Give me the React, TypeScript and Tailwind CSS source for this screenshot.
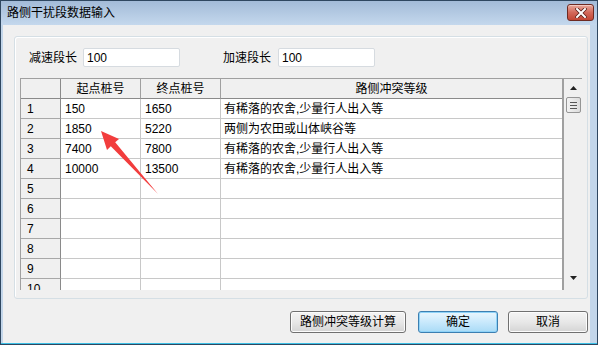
import { Fragment } from "react";

const FONT = "font-['Liberation_Sans','Noto_Sans_CJK_SC',sans-serif]";

const rows = [
  { a: "150", b: "1650", c: "有稀落的农舍,少量行人出入等" },
  { a: "1850", b: "5220", c: "两侧为农田或山体峡谷等" },
  { a: "7400", b: "7800", c: "有稀落的农舍,少量行人出入等" },
  { a: "10000", b: "13500", c: "有稀落的农舍,少量行人出入等" },
  { a: "", b: "", c: "" },
  { a: "", b: "", c: "" },
  { a: "", b: "", c: "" },
  { a: "", b: "", c: "" },
  { a: "", b: "", c: "" },
  { a: "", b: "", c: "" },
];

const CloseButton = () => (
  <div className="w-[27px] h-[17px] rounded-[3px] border border-[#6e2a22] bg-gradient-to-b from-[#e7a79b] via-[#d3695a] to-[#c24533] flex items-center justify-center shadow-[inset_0_1px_0_#f3c9c1]">
    <svg width="12" height="10" viewBox="0 0 12 10">
      <path
        d="M2 1 L10 9 M10 1 L2 9"
        stroke="#5a1f18"
        strokeWidth="3.6"
        strokeLinecap="square"
      />
      <path
        d="M2 1 L10 9 M10 1 L2 9"
        stroke="#ffffff"
        strokeWidth="2"
        strokeLinecap="square"
      />
    </svg>
  </div>
);

const Button = ({ label, primary }: { label: string; primary?: boolean }) => (
  <div
    className={
      primary
        ? "w-[80px] h-[22px] rounded-[3px] border border-[#3c7fb1] bg-gradient-to-b from-[#eaf6fd] via-[#c9e9fc] to-[#a9dbf6] shadow-[inset_0_0_0_1px_#8fd3f8] flex items-center justify-center text-[12px] text-black"
        : "h-[22px] rounded-[3px] border border-[#707070] bg-gradient-to-b from-[#f4f4f4] via-[#e8e8e8] to-[#d4d4d4] shadow-[inset_0_0_0_1px_#fcfcfc] flex items-center justify-center text-[12px] text-black"
    }
  >
    {label}
  </div>
);

const ScrollBar = () => (
  <div className="w-[20px] h-full border-l-2 border-[#a0a0a0] bg-[#f0f0f0] flex flex-col items-center">
    <div className="h-[18px] w-full flex items-center justify-center">
      <svg width="7" height="4" viewBox="0 0 7 4">
        <path d="M0 4 L3.5 0 L7 4 Z" fill="#222" />
      </svg>
    </div>
    <div className="w-[15px] h-[16px] ml-[1px] rounded-[2px] border border-[#959595] bg-gradient-to-r from-[#f2f2f2] to-[#dcdcdc] flex flex-col items-center justify-center gap-[2px]">
      <div className="w-[7px] h-px bg-[#555]" />
      <div className="w-[7px] h-px bg-[#555]" />
      <div className="w-[7px] h-px bg-[#555]" />
    </div>
    <div className="flex-1" />
    <div className="h-[16px] w-full flex items-start justify-center pt-[2px]">
      <svg width="7" height="4" viewBox="0 0 7 4">
        <path d="M0 0 L7 0 L3.5 4 Z" fill="#222" />
      </svg>
    </div>
  </div>
);

const Grid = () => (
  <div className="flex-1 overflow-hidden bg-white">
    <div className="grid grid-cols-[40px_80px_80px_341px] auto-rows-[20px]">
      <div className="bg-[#f0f0f0] border-r border-b border-[#8a8a8a]" />
      <div className="bg-[#f0f0f0] border-r border-b border-[#a0a0a0] border-b-[#8a8a8a] flex items-center justify-center">
        起点桩号
      </div>
      <div className="bg-[#f0f0f0] border-r border-b border-[#a0a0a0] border-b-[#8a8a8a] flex items-center justify-center">
        终点桩号
      </div>
      <div className="bg-[#f0f0f0] border-b border-[#8a8a8a] flex items-center justify-center">
        路侧冲突等级
      </div>
      {rows.map((r, i) => (
        <Fragment key={i}>
          <div className="bg-[#f0f0f0] border-r border-b border-[#8a8a8a] border-b-[#a8a8a8] flex items-center pl-[6px]">
            {i + 1}
          </div>
          <div className="border-r border-b border-[#c8c8c8] flex items-center pl-[4px]">
            {r.a}
          </div>
          <div className="border-r border-b border-[#c8c8c8] flex items-center pl-[4px]">
            {r.b}
          </div>
          <div className="border-b border-[#c8c8c8] flex items-center pl-[3px]">
            {r.c}
          </div>
        </Fragment>
      ))}
    </div>
  </div>
);

export default function App() {
  return (
    <div className={`w-[602px] h-[346px] bg-white relative text-[12px] text-black ${FONT}`}>
      <div className="w-[598px] h-[345px] border border-[#2f4760] bg-[#c3d6ea] flex flex-col">
        {/* title bar */}
        <div className="h-[24px] shrink-0 bg-gradient-to-b from-[#a3bbd8] to-[#c4d8ed] flex items-start pl-[6px] pr-[3px]">
          <span className="mt-[5px] text-[12px] leading-[14px]">路侧干扰段数据输入</span>
          <div className="ml-auto mt-[3px]">
            <CloseButton />
          </div>
        </div>
        {/* client area */}
        <div className="flex-1 ml-[2px] mr-[7px] bg-[#f0f0f0] pl-[11px] pt-[11px] flex flex-col">
          <div className="w-[574px] h-[263px] rounded-[3px] border border-[#d5dfe5] shadow-[inset_1px_1px_0_#ffffff] pt-[11px] pl-[5px] flex flex-col">
            <div className="flex items-center h-[19px] ml-[9px]">
              <span className="w-[48px]">减速段长</span>
              <div className="ml-[6px] w-[97px] h-[19px] border border-[#d6dbe0] rounded-[2px] bg-white flex items-center pl-[3px]">
                100
              </div>
              <span className="ml-[43px] w-[48px]">加速段长</span>
              <div className="ml-[7px] w-[97px] h-[19px] border border-[#d6dbe0] rounded-[2px] bg-white flex items-center pl-[3px]">
                100
              </div>
            </div>
            <div className="mt-[11px] w-[562px] h-[212px] border-l border-t border-[#a0a0a0] flex">
              <Grid />
              <ScrollBar />
            </div>
          </div>
          <div className="mt-[12px] w-[574px] flex justify-end gap-[10px]">
            <div className="w-[116px] mr-[2px]">
              <Button label="路侧冲突等级计算" />
            </div>
            <Button label="确定" primary />
            <div className="w-[80px]">
              <Button label="取消" />
            </div>
          </div>
        </div>
        <div className="h-px shrink-0 bg-[#3cc0e6]" />
      </div>
      {/* annotation arrow */}
      <svg
        className="absolute left-0 top-0 pointer-events-none"
        width="602"
        height="346"
        viewBox="0 0 602 346"
      >
        <path
          d="M101 131 L119 139 L115.2 142.3 L158 194 L110.8 146.3 L107 150 Z"
          fill="#f23d3d"
        />
      </svg>
    </div>
  );
}
